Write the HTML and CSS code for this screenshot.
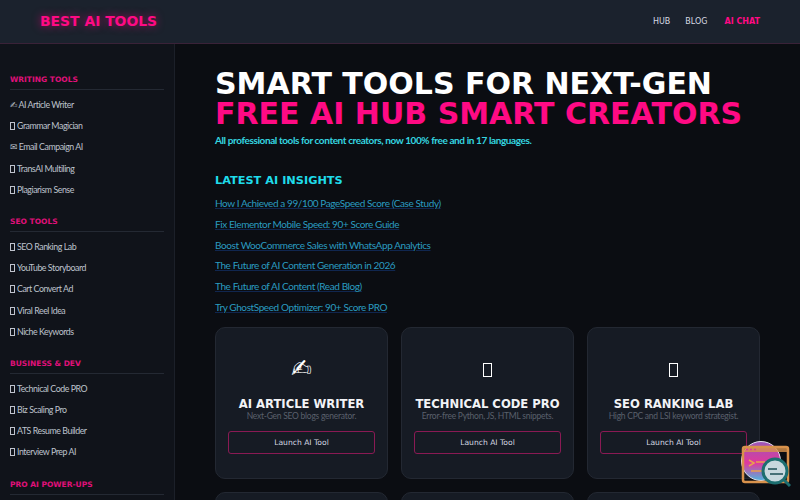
FILE: index.html
```html
<!DOCTYPE html>
<html lang="en">
<head>
    <meta charset="UTF-8">
    <meta name="viewport" content="width=device-width, initial-scale=1.0">
    <title>Best AI Tools</title>
    <link rel="stylesheet" href="styles.css">
</head>
<body>
    <header class="topbar">
        <div class="logo">BEST AI TOOLS</div>
        <nav class="topnav">
            <a href="#">HUB</a>
            <a href="#">BLOG</a>
            <a href="#" class="nav-hot">AI CHAT</a>
        </nav>
    </header>

    <div class="layout">
        <!-- Sidebar -->
        <aside class="sidebar">
            <div class="side-group">
                <h3>WRITING TOOLS</h3>
                <a href="#"><span class="glyph">✍&#xFE0E;</span> AI Article Writer</a>
                <a href="#"><span class="tofu"></span>Grammar Magician</a>
                <a href="#"><span class="glyph">✉&#xFE0E;</span> Email Campaign AI</a>
                <a href="#"><span class="tofu"></span>TransAI Multiling</a>
                <a href="#"><span class="tofu"></span>Plagiarism Sense</a>
            </div>
            <div class="side-group">
                <h3>SEO TOOLS</h3>
                <a href="#"><span class="tofu"></span>SEO Ranking Lab</a>
                <a href="#"><span class="tofu"></span>YouTube Storyboard</a>
                <a href="#"><span class="tofu"></span>Cart Convert Ad</a>
                <a href="#"><span class="tofu"></span>Viral Reel Idea</a>
                <a href="#"><span class="tofu"></span>Niche Keywords</a>
            </div>
            <div class="side-group">
                <h3>BUSINESS &amp; DEV</h3>
                <a href="#"><span class="tofu"></span>Technical Code PRO</a>
                <a href="#"><span class="tofu"></span>Biz Scaling Pro</a>
                <a href="#"><span class="tofu"></span>ATS Resume Builder</a>
                <a href="#"><span class="tofu"></span>Interview Prep AI</a>
            </div>
            <div class="side-group">
                <h3>PRO AI POWER-UPS</h3>
            </div>
        </aside>

        <!-- Main content -->
        <main class="content">
            <h1>SMART TOOLS FOR NEXT-GEN<br><span class="hot">FREE AI HUB SMART CREATORS</span></h1>
            <p class="tagline">All professional tools for content creators, now 100% free and in 17 languages.</p>

            <h2>LATEST AI INSIGHTS</h2>
            <ul class="insights">
                <li><a href="#">How I Achieved a 99/100 PageSpeed Score (Case Study)</a></li>
                <li><a href="#">Fix Elementor Mobile Speed: 90+ Score Guide</a></li>
                <li><a href="#">Boost WooCommerce Sales with WhatsApp Analytics</a></li>
                <li><a href="#">The Future of AI Content Generation in 2026</a></li>
                <li><a href="#">The Future of AI Content (Read Blog)</a></li>
                <li><a href="#">Try GhostSpeed Optimizer: 90+ Score PRO</a></li>
            </ul>

            <div class="tool-grid">
                <div class="tool-card">
                    <div class="tool-icon">✍&#xFE0E;</div>
                    <h4>AI ARTICLE WRITER</h4>
                    <p>Next-Gen SEO blogs generator.</p>
                    <a href="#" class="tool-btn">Launch AI Tool</a>
                </div>
                <div class="tool-card">
                    <div class="tool-icon"><span class="tofu-big"></span></div>
                    <h4>TECHNICAL CODE PRO</h4>
                    <p>Error-free Python, JS, HTML snippets.</p>
                    <a href="#" class="tool-btn">Launch AI Tool</a>
                </div>
                <div class="tool-card">
                    <div class="tool-icon"><span class="tofu-big"></span></div>
                    <h4>SEO RANKING LAB</h4>
                    <p>High CPC and LSI keyword strategist.</p>
                    <a href="#" class="tool-btn">Launch AI Tool</a>
                </div>
                <div class="tool-card"></div>
                <div class="tool-card"></div>
                <div class="tool-card"></div>
            </div>
        </main>
    </div>

    <!-- Floating chat badge -->
    <svg class="float-badge" width="50" height="47" viewBox="0 0 50 47">
        <defs>
            <linearGradient id="disc" x1="0" y1="0" x2="0" y2="1">
                <stop offset="0" stop-color="#9a58b8"/>
                <stop offset="0.55" stop-color="#e0389c"/>
                <stop offset="1" stop-color="#4fb4e0"/>
            </linearGradient>
        </defs>
        <circle cx="20" cy="20" r="19.5" fill="url(#disc)" stroke="#e8e4f0" stroke-width="1"/>
        <rect x="2" y="6" width="45" height="35" rx="2" fill="none" stroke="#d8924c" stroke-width="2.5"/>
        <rect x="2" y="6" width="45" height="5" fill="#d8924c" fill-opacity="0.8"/>
        <path d="M5 8.5h2M9 8.5h2M13 8.5h2" stroke="#e03a9a" stroke-width="1.4"/>
        <path d="M8 19l5 3-5 3M15 21h9M10 30h13" fill="none" stroke="#e8a050" stroke-width="1.5"/>
        <circle cx="34" cy="30" r="12" fill="#c8d8de" stroke="#1c6e70" stroke-width="3"/>
        <path d="M27 28h9M29 33h13" stroke="#1c4e55" stroke-width="1.6"/>
        <path d="M43 39l6 6" stroke="#1c6e70" stroke-width="3"/>
    </svg>
</body>
</html>
```

FILE: styles.css
```css
body {
    font-family: 'Lato', sans-serif;
    margin: 0;
    padding: 0;
    height: 500px;
    overflow: hidden;
    background-color: #0b0d12;
    color: #c9cdd6;
}

a {
    text-decoration: none;
    color: inherit;
}

.topbar {
    height: 44px;
    box-sizing: border-box;
    padding: 0 40px 1px;
    display: flex;
    align-items: center;
    justify-content: space-between;
    background-color: #1b222d;
    border-bottom: 1px solid #3a2238;
}

.logo {
    font-family: 'DejaVu Sans', sans-serif;
    font-size: 13.9px;
    font-weight: bold;
    color: #ff0a84;
    text-shadow: 0 0 8px rgba(255, 0, 128, 0.6);
}

.topnav {
    display: flex;
    gap: 15px;
    font-family: 'DejaVu Sans', sans-serif;
    font-size: 8px;
    color: #d5d9e2;
}

.nav-hot {
    margin-left: 2px;
    color: #ff0a84;
    font-weight: bold;
}

.layout {
    display: flex;
    height: 456px;
}

.sidebar {
    width: 175px;
    box-sizing: border-box;
    flex-shrink: 0;
    padding: 31px 10px 0;
    background-color: #10131a;
    border-right: 1px solid #1c2029;
    overflow: hidden;
}

.side-group {
    margin-bottom: 16px;
}

.sidebar h3 {
    margin: 0 0 5px;
    padding-bottom: 4px;
    font-family: 'DejaVu Sans', sans-serif;
    font-size: 7.5px;
    line-height: 10px;
    font-weight: bold;
    color: #e0107a;
    border-bottom: 1px solid #242933;
}

.sidebar a {
    display: block;
    height: 21.2px;
    line-height: 20.5px;
    font-size: 8.8px;
    color: #bfc3cd;
    letter-spacing: -0.45px;
    white-space: nowrap;
}

.glyph {
    font-family: 'DejaVu Sans', sans-serif;
}

.tofu {
    display: inline-block;
    width: 3px;
    height: 6px;
    margin-right: 2px;
    vertical-align: -1px;
    border: 1px solid #bfc3cd;
}

.tofu-big {
    display: inline-block;
    width: 7px;
    height: 12px;
    vertical-align: middle;
    border: 1.5px solid #ffffff;
}

.content {
    flex: 1;
    padding: 25px 40px 0;
    min-width: 0;
}

h1 {
    margin: 0;
    font-family: 'DejaVu Sans', sans-serif;
    font-size: 30px;
    line-height: 29.5px;
    font-weight: bold;
    color: #ffffff;
    white-space: nowrap;
}

.hot {
    color: #ff0a84;
}

.tagline {
    margin: 6px 0 0;
    font-size: 10px;
    font-weight: bold;
    letter-spacing: -0.4px;
    color: #35d6e0;
}

h2 {
    margin: 28px 0 6px;
    font-family: 'DejaVu Sans', sans-serif;
    font-size: 11.3px;
    font-weight: bold;
    color: #1fdcea;
}

.insights {
    list-style: none;
    margin: 0;
    padding: 0;
}

.insights li {
    height: 20.8px;
    line-height: 20.8px;
    font-size: 10px;
    letter-spacing: -0.4px;
    color: #2a9cc0;
}

.insights a {
    text-decoration: underline;
    text-decoration-color: #10264f;
}

.tool-grid {
    margin-top: 9px;
    display: grid;
    grid-template-columns: repeat(3, minmax(0, 1fr));
    gap: 13px;
}

.tool-card {
    height: 152px;
    box-sizing: border-box;
    padding: 29px 12px 0;
    background-color: #161b24;
    border: 1px solid #232832;
    border-radius: 10px;
    text-align: center;
}

.tool-icon {
    height: 24px;
    font-family: 'DejaVu Sans', sans-serif;
    font-size: 25px;
    line-height: 24px;
    color: #ffffff;
}

.tool-card h4 {
    margin: 16px 0 0;
    font-family: 'DejaVu Sans', sans-serif;
    font-size: 11.6px;
    line-height: 14px;
    font-weight: bold;
    color: #f2f3f6;
    white-space: nowrap;
}

.tool-card p {
    margin: 0;
    font-size: 8.5px;
    line-height: 10.5px;
    letter-spacing: -0.25px;
    color: #5a606c;
    white-space: nowrap;
}

.tool-btn {
    display: block;
    margin-top: 9.5px;
    height: 21px;
    line-height: 21px;
    font-family: 'DejaVu Sans', sans-serif;
    font-size: 7.6px;
    color: #d5d9e2;
    border: 1px solid #8a1a54;
    border-radius: 3px;
}

.float-badge {
    position: fixed;
    left: 741px;
    top: 441px;
}
```
